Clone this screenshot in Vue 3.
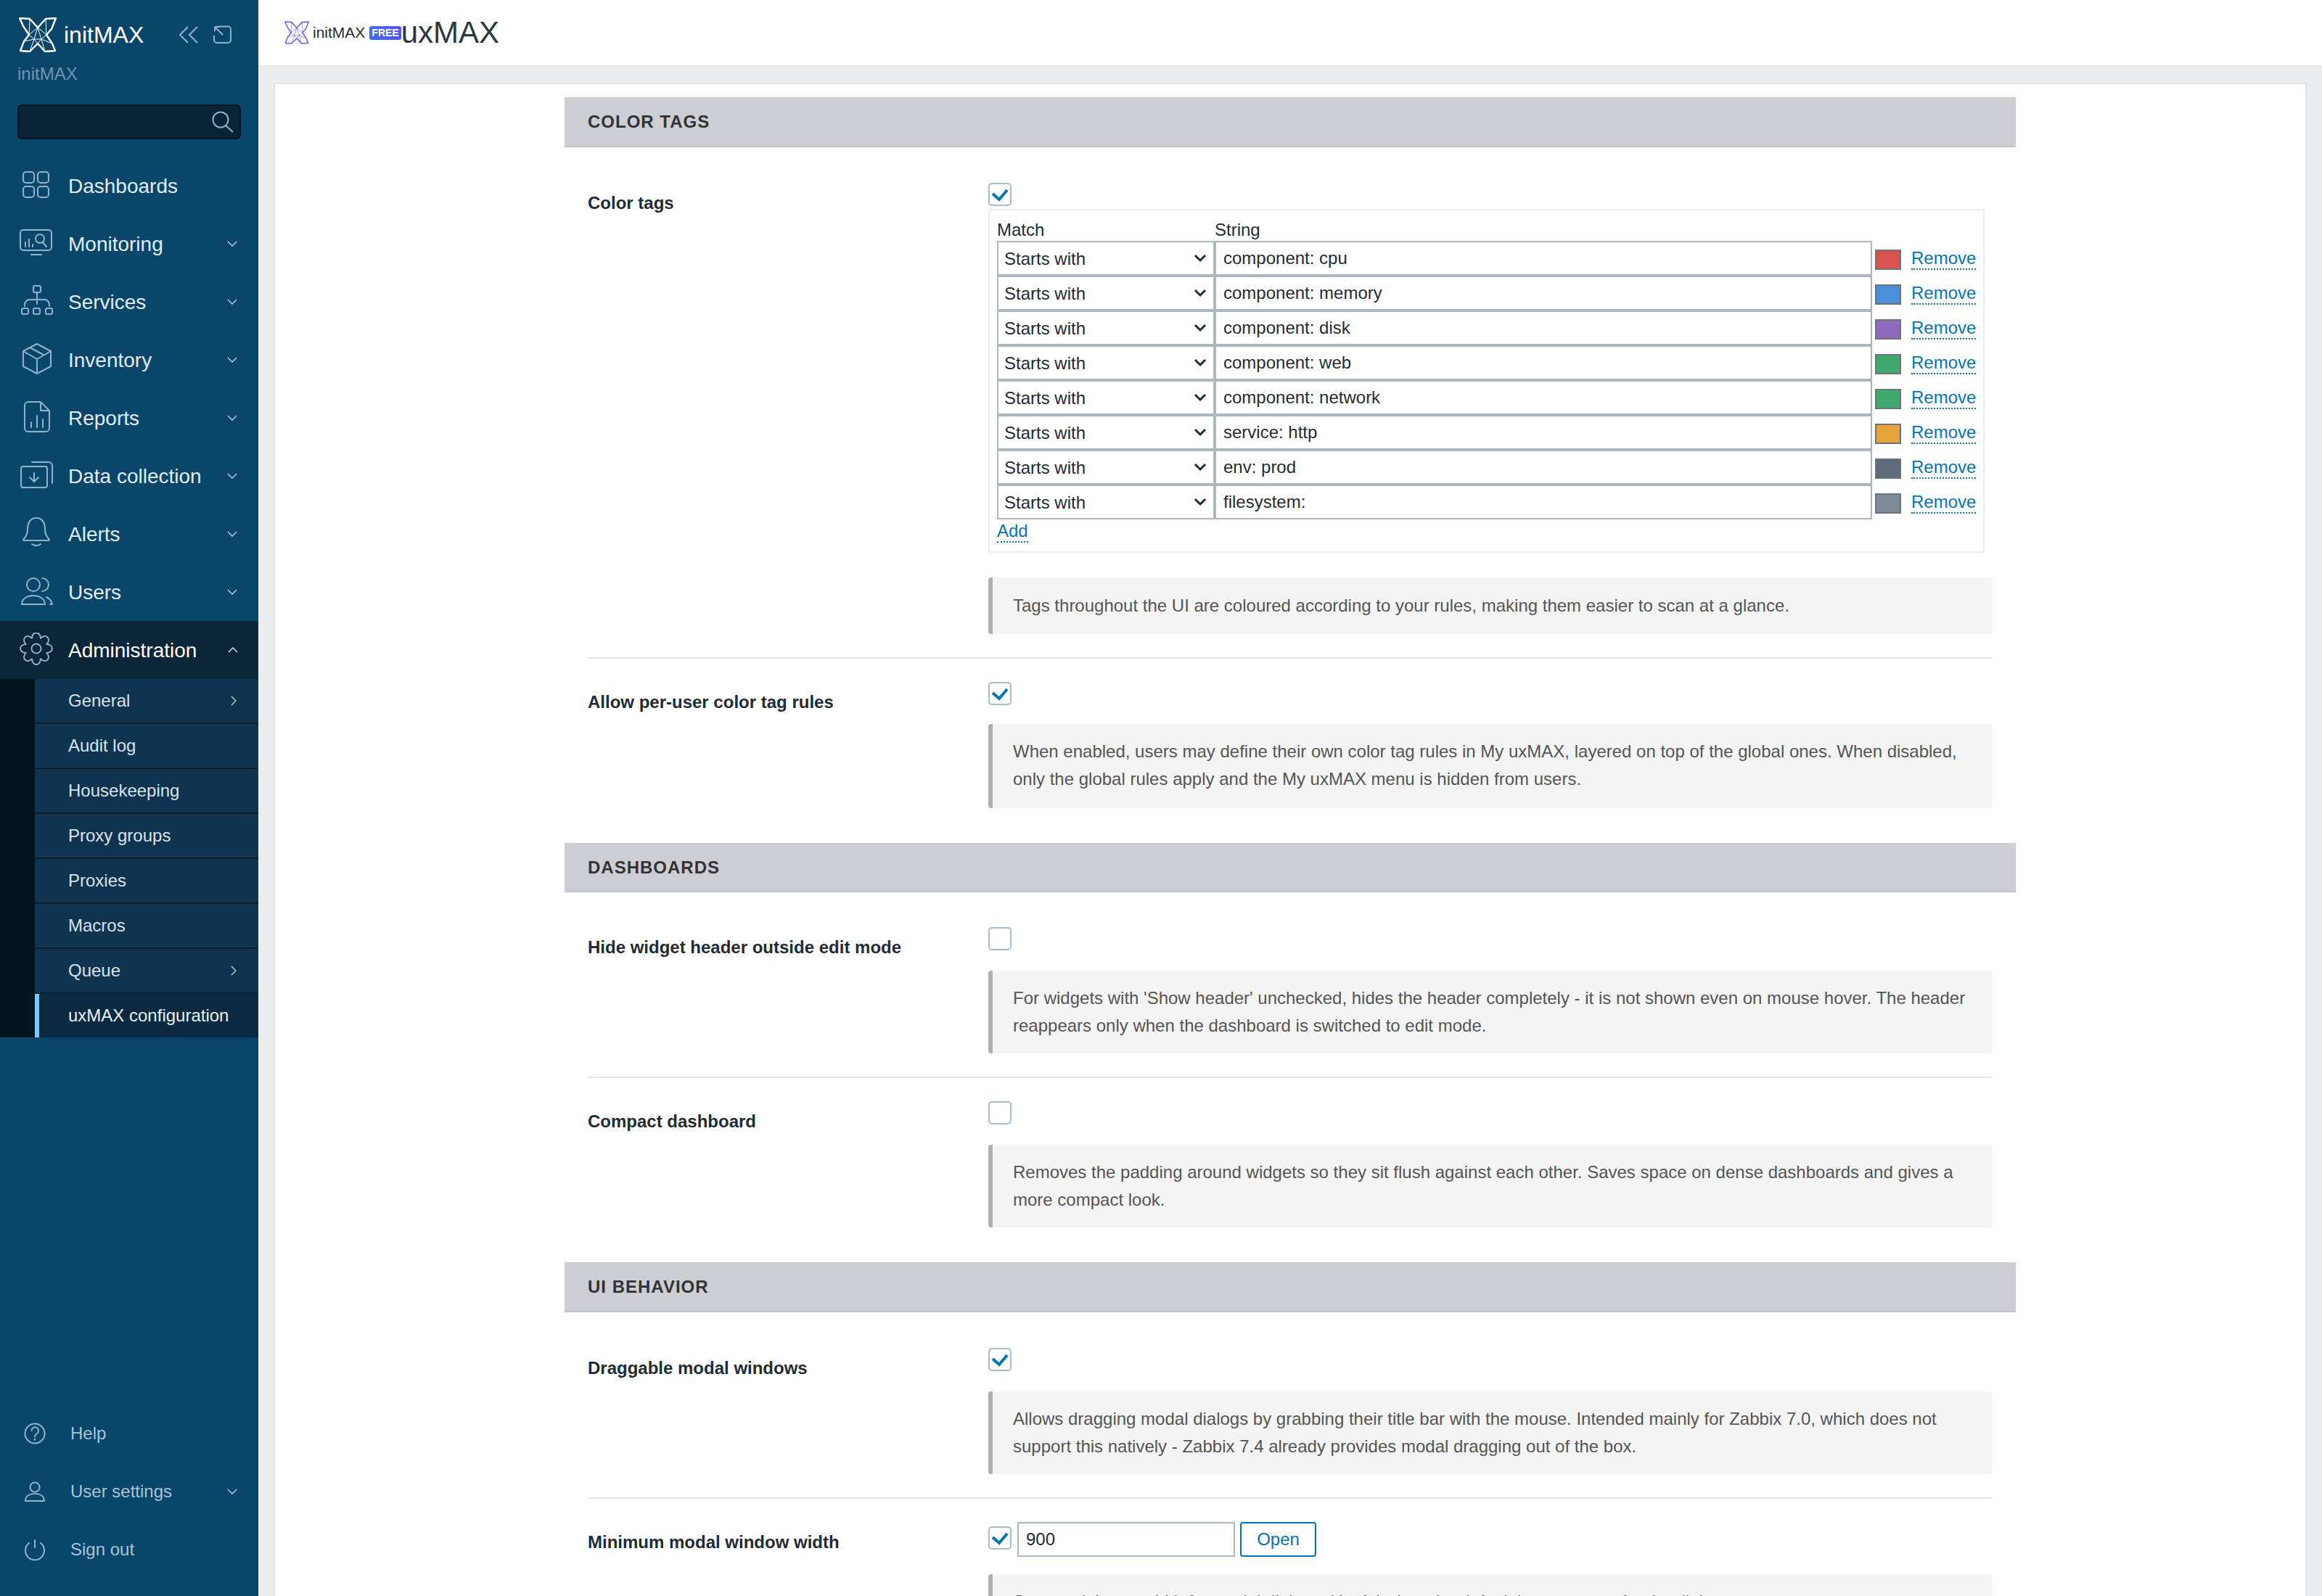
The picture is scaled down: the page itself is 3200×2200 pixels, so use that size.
<script setup>
const rr = (x, y, w, h, r) =>
  `M${x + r} ${y}H${x + w - r}a${r} ${r} 0 0 1 ${r} ${r}V${y + h - r}a${r} ${r} 0 0 1 -${r} ${r}H${x + r}a${r} ${r} 0 0 1 -${r} -${r}V${y + r}a${r} ${r} 0 0 1 ${r} -${r}Z`;

const circle = (cx, cy, r) =>
  `M${cx - r} ${cy}a${r} ${r} 0 1 0 ${r * 2} 0a${r} ${r} 0 1 0 -${r * 2} 0Z`;

// cog with eight rounded lobes
const gear = () => {
  const cx = 24;
  const cy = 22;
  const pt = (rad, a) => `${(cx + rad * Math.cos(a)).toFixed(1)} ${(cy + rad * Math.sin(a)).toFixed(1)}`;
  const step = Math.PI / 4;
  let d = `M${pt(15.5, -step / 2)}`;
  for (let i = 0; i < 8; i++) {
    const a = i * step;
    d += `C${pt(25, a - 0.22)} ${pt(25, a + 0.22)} ${pt(15.5, a + step / 2)}`;
  }
  return d + "Z" + circle(cx, cy, 6.5);
};

const icons = {
  dashboards: rr(6, 5, 15, 15, 4) + rr(26, 5, 15, 15, 4) + rr(6, 25, 15, 15, 4) + rr(26, 25, 15, 15, 4),
  monitoring: rr(2, 5, 43, 28, 4) + "M17 39H31M9 28V22M14 28V18M19 28V25" + circle(29, 17, 6) + "M33 22L38 28",
  services: rr(20, 2, 10, 9, 2) + "M25 11V27M8 30V28a7 7 0 0 1 7 -7H35a7 7 0 0 1 7 7V30" + rr(4, 33, 9, 8, 2) + rr(20, 33, 9, 8, 2) + rr(37, 33, 9, 8, 2),
  inventory: "M25 2L44 12V33L25 43L6 33V12ZM6 12L25 23L44 12M25 23V43M15 7L34 17",
  reports: "M13 2H30L42 14V38a5 5 0 0 1 -5 5H13a5 5 0 0 1 -5 -5V7a5 5 0 0 1 5 -5ZM30 2V14H42M17 37V30M25 37V21M33 37V26",
  data: rr(3, 11, 36, 29, 3) + "M18 5H41a5 5 0 0 1 5 5V34M21 20V31M15 26L21 32L27 26",
  alerts: "M24 2C15 2 12 10 12 17C12 25 9 29 6 32a1 1 0 0 0 1 1H41a1 1 0 0 0 1 -1C39 29 36 25 36 17C36 10 33 2 24 2ZM18 38Q24 42 30 38",
  users: circle(20, 14, 9) + "M4 41C4 33 12 29 20 29C28 29 36 33 36 41ZM32 5a9 9 0 0 1 0 18M38 31C42 33 45 36 46 41H43",
  gear: gear(),
  help: circle(24, 24, 13.5) + "M19.5 20a4.8 4.8 0 1 1 7.5 4c-2 1.4 -3 2.4 -3 4.5M24 31.5V33",
  user: circle(24, 18, 6.5) + "M11 37C11 30 17 27 24 27C31 27 37 30 37 37Z",
  power: "M24 11V21M16 15a13 13 0 1 0 16 0"
};

const navItems = [
  { label: "Dashboards", icon: "dashboards" },
  { label: "Monitoring", icon: "monitoring", more: true },
  { label: "Services", icon: "services", more: true },
  { label: "Inventory", icon: "inventory", more: true },
  { label: "Reports", icon: "reports", more: true },
  { label: "Data collection", icon: "data", more: true },
  { label: "Alerts", icon: "alerts", more: true },
  { label: "Users", icon: "users", more: true }
];

const subItems = [
  { label: "General", more: true },
  { label: "Audit log" },
  { label: "Housekeeping" },
  { label: "Proxy groups" },
  { label: "Proxies" },
  { label: "Macros" },
  { label: "Queue", more: true },
  { label: "uxMAX configuration", active: true }
];

const footerItems = [
  { label: "Help", icon: "help" },
  { label: "User settings", icon: "user", more: true },
  { label: "Sign out", icon: "power" }
];

const tagRules = [
  { value: "component: cpu", color: "#d9534f" },
  { value: "component: memory", color: "#4a90d9" },
  { value: "component: disk", color: "#8e6bbf" },
  { value: "component: web", color: "#3fa86b" },
  { value: "component: network", color: "#3fa86b" },
  { value: "service: http", color: "#e5a33b" },
  { value: "env: prod", color: "#5d6b7a" },
  { value: "filesystem:", color: "#7d8a97" }
];

const checkMark = "M2 11L11 19L22 6";
const logoOutline = "M1 1L15 2L26 14L37 2L51 1L45 16L38 24L46 36L50 46L36 47L26 36L15 47L2 46L7 33L14 24L6 12Z";
const logoMesh = "M15 2L14 24L26 14L38 24L37 2M6 12L14 24L7 33L21 30L15 47M45 16L38 24L46 36L31 30L36 47M14 24L21 30L26 36L31 30L38 24M26 14L21 30M26 14L31 30M21 30H31";
</script>

<template>
  <div class="page">
    <aside class="sidebar">
      <div class="brand">
        <svg class="logo" viewBox="0 0 52 48" width="52" height="48">
          <path :d="logoOutline" fill="none" stroke="#fff" stroke-width="2.4" stroke-linejoin="round" />
          <path :d="logoMesh" fill="none" stroke="#fff" stroke-width="1" />
        </svg>
        <span class="brand-name">initMAX</span>
        <svg class="brand-tool collapse" viewBox="0 0 28 24" width="28" height="24">
          <path d="M13 1L2 12L13 23M26 1L15 12L26 23" />
        </svg>
        <svg class="brand-tool expand" viewBox="0 0 26 26" width="26" height="26">
          <path d="M6 1.5H20a4 4 0 0 1 4 4V20a4 4 0 0 1 -4 4H5a4 4 0 0 1 -4 -4V14M2 2L13 13M2 2V8M2 2H8" />
        </svg>
      </div>
      <div class="instance">initMAX</div>
      <div class="search">
        <svg viewBox="0 0 30 30" width="30" height="30">
          <path :d="circle(12, 12, 10.5)" />
          <path d="M19 20L29 29" />
        </svg>
      </div>

      <nav class="nav">
        <a v-for="item in navItems" :key="item.label" class="nav-item">
          <svg class="icon" viewBox="0 0 48 48" width="48" height="48"><path :d="icons[item.icon]" /></svg>
          <span class="nav-label">{{ item.label }}</span>
          <svg v-if="item.more" class="chev" viewBox="0 0 14 8" width="14" height="8"><path d="M1 1L7 7L13 1" /></svg>
        </a>
        <a class="nav-item open">
          <svg class="icon" viewBox="0 0 48 48" width="48" height="48"><path :d="icons.gear" /></svg>
          <span class="nav-label">Administration</span>
          <svg class="chev up" viewBox="0 0 14 8" width="14" height="8"><path d="M1 7L7 1L13 7" /></svg>
        </a>
        <div class="submenu">
          <a v-for="sub in subItems" :key="sub.label" :class="['sub-item', { active: sub.active }]">
            <span>{{ sub.label }}</span>
            <svg v-if="sub.more" class="chev-right" viewBox="0 0 8 14" width="8" height="14"><path d="M1 1L7 7L1 13" /></svg>
          </a>
        </div>
      </nav>

      <div class="sidebar-footer">
        <a v-for="item in footerItems" :key="item.label" class="foot-item">
          <svg class="icon" viewBox="0 0 48 48" width="48" height="48"><path :d="icons[item.icon]" /></svg>
          <span class="foot-label">{{ item.label }}</span>
          <svg v-if="item.more" class="chev" viewBox="0 0 14 8" width="14" height="8"><path d="M1 1L7 7L13 1" /></svg>
        </a>
      </div>
    </aside>

    <div class="main">
      <header class="topbar">
        <svg class="top-logo" viewBox="0 0 52 48" width="34" height="32">
          <path :d="logoOutline" fill="none" stroke="#6c63f5" stroke-width="2.4" stroke-linejoin="round" />
          <path :d="logoMesh" fill="none" stroke="#6c63f5" stroke-width="1" />
        </svg>
        <span class="top-brand">initMAX</span>
        <span class="badge">FREE</span>
        <h1>uxMAX</h1>
      </header>

      <div class="content">
        <div class="card">
          <form class="form">
            <section>
              <h2>Color tags</h2>
              <div class="row first">
                <label>Color tags</label>
                <div class="field">
                  <span class="check on">
                    <svg viewBox="0 0 24 24" width="24" height="24"><path :d="checkMark" /></svg>
                  </span>
                  <div class="tag-table">
                    <div class="tag-head"><span class="col-match">Match</span><span>String</span></div>
                    <div v-for="rule in tagRules" :key="rule.value" class="tag-row">
                      <select class="tag-select"><option>Starts with</option></select>
                      <input class="tag-input" type="text" :value="rule.value" />
                      <span class="swatch" :style="{ background: rule.color }"></span>
                      <a class="link">Remove</a>
                    </div>
                    <a class="link add">Add</a>
                  </div>
                  <p class="note table-note">Tags throughout the UI are coloured according to your rules, making them easier to scan at a glance.</p>
                </div>
              </div>
              <div class="row">
                <label>Allow per-user color tag rules</label>
                <div class="field">
                  <span class="check on">
                    <svg viewBox="0 0 24 24" width="24" height="24"><path :d="checkMark" /></svg>
                  </span>
                  <p class="note allow-note">When enabled, users may define their own color tag rules in My uxMAX, layered on top of the global ones. When disabled, only the global rules apply and the My uxMAX menu is hidden from users.</p>
                </div>
              </div>
            </section>

            <section class="tight">
              <h2>Dashboards</h2>
              <div class="row first">
                <label>Hide widget header outside edit mode</label>
                <div class="field">
                  <span class="check"></span>
                  <p class="note">For widgets with 'Show header' unchecked, hides the header completely - it is not shown even on mouse hover. The header reappears only when the dashboard is switched to edit mode.</p>
                </div>
              </div>
              <div class="row">
                <label>Compact dashboard</label>
                <div class="field">
                  <span class="check"></span>
                  <p class="note">Removes the padding around widgets so they sit flush against each other. Saves space on dense dashboards and gives a more compact look.</p>
                </div>
              </div>
            </section>

            <section>
              <h2>UI behavior</h2>
              <div class="row first">
                <label>Draggable modal windows</label>
                <div class="field">
                  <span class="check on">
                    <svg viewBox="0 0 24 24" width="24" height="24"><path :d="checkMark" /></svg>
                  </span>
                  <p class="note">Allows dragging modal dialogs by grabbing their title bar with the mouse. Intended mainly for Zabbix 7.0, which does not support this natively - Zabbix 7.4 already provides modal dragging out of the box.</p>
                </div>
              </div>
              <div class="row">
                <label>Minimum modal window width</label>
                <div class="field">
                  <div class="width-line">
                    <span class="check on">
                      <svg viewBox="0 0 24 24" width="24" height="24"><path :d="checkMark" /></svg>
                    </span>
                    <input class="width-input" type="text" value="900" />
                    <button class="open-btn" type="button">Open</button>
                  </div>
                  <p class="note width-note">Sets a minimum width for modal dialogs. Useful when the default is too narrow for the dialog content.</p>
                </div>
              </div>
            </section>
          </form>
        </div>
      </div>
    </div>
  </div>
</template>

<style>
html,
body {
  margin: 0;
  overflow: hidden;
}
</style>

<style scoped>
.page {
  display: flex;
  width: 3200px;
  height: 2200px;
  overflow: hidden;
  font-family: "Liberation Sans", Arial, sans-serif;
  font-size: 24px;
  color: #1f2c33;
  background: #ebeef0;
}

.sidebar {
  display: flex;
  flex-direction: column;
  flex: 0 0 356px;
  background: #0a466a;
}

.brand {
  display: flex;
  align-items: center;
  height: 48px;
  margin-top: 24px;
  padding-left: 26px;
}

.brand-name {
  margin-left: 10px;
  width: 158px;
  font-size: 32px;
  color: #fff;
}

.brand-tool {
  fill: none;
  stroke: #8fb3c9;
  stroke-width: 2;
}

.expand {
  margin-left: 20px;
}

.instance {
  margin: 16px 0 0 24px;
  height: 28px;
  line-height: 28px;
  color: #6f95ac;
}

.search {
  display: flex;
  align-items: center;
  justify-content: flex-end;
  box-sizing: border-box;
  height: 48px;
  margin: 28px 24px 0;
  padding-right: 8px;
  background: #092436;
  border: 2px solid #04141e;
  border-radius: 6px;
}

.search svg {
  fill: none;
  stroke: #8fb3c9;
  stroke-width: 2;
}

.nav {
  margin-top: 24px;
}

.nav-item {
  display: flex;
  align-items: center;
  height: 80px;
  padding-left: 26px;
  font-size: 28px;
  color: #e1ebf1;
}

.nav-item.open {
  background: #0a2638;
  color: #fff;
}

.icon {
  flex: none;
  fill: none;
  stroke: #8fb3c9;
  stroke-width: 2;
  stroke-linecap: round;
  stroke-linejoin: round;
}

.nav-label {
  flex: 1;
  margin-left: 20px;
  padding-top: 2px;
}

.chev {
  flex: none;
  margin-right: 29px;
  fill: none;
  stroke: #c3d6e1;
  stroke-width: 1.3;
}

.chev.up {
  margin-right: 28px;
  stroke: #e8f0f4;
}

.submenu {
  padding-left: 48px;
  background: #03141d;
}

.sub-item {
  display: flex;
  align-items: center;
  justify-content: space-between;
  box-sizing: border-box;
  height: 62px;
  padding: 0 30px 0 46px;
  background: #10344f;
  border-bottom: 2px solid #07202f;
  color: #d7e3ea;
}

.sub-item.active {
  height: 60px;
  padding-left: 40px;
  background: #0c2a40;
  border-bottom: 0;
  border-left: 6px solid #7fc7ff;
  color: #e8f0f4;
}

.chev-right {
  fill: none;
  stroke: #c3d6e1;
  stroke-width: 1.3;
}

.sidebar-footer {
  margin-top: auto;
  padding-bottom: 24px;
}

.foot-item {
  display: flex;
  align-items: center;
  height: 80px;
  padding-left: 24px;
  color: #a6c4d6;
}

.foot-label {
  flex: 1;
  margin-left: 25px;
}

.main {
  display: flex;
  flex-direction: column;
  flex: 1;
  min-width: 0;
}

.topbar {
  display: flex;
  align-items: center;
  flex: none;
  box-sizing: border-box;
  height: 92px;
  padding-left: 36px;
  background: #fff;
  border-bottom: 2px solid #e3e7ea;
}

.top-brand {
  margin-left: 5px;
  font-size: 21px;
  color: #1f2c33;
}

.badge {
  margin-left: 6px;
  padding: 0 3px;
  height: 19px;
  line-height: 19px;
  font-size: 14px;
  font-weight: 700;
  color: #fff;
  border-radius: 3px;
  background: linear-gradient(90deg, #3e6bf5, #5a55f0);
}

h1 {
  margin: 0;
  font-size: 42px;
  font-weight: 400;
  color: #2a3843;
}

.content {
  flex: 1;
  min-height: 0;
  padding: 22px 21px 0 21px;
}

.card {
  box-sizing: border-box;
  height: 100%;
  padding-top: 18px;
  background: #fff;
  border-left: 2px solid #e0e4e7;
  border-right: 2px solid #e0e4e7;
  border-top: 2px solid #e0e4e7;
}

.form {
  width: 2000px;
  margin: 0 auto;
}

h2 {
  box-sizing: border-box;
  height: 69px;
  margin: 0 0 17px;
  padding-left: 32px;
  line-height: 67px;
  font-size: 24px;
  font-weight: 700;
  letter-spacing: 1px;
  text-transform: uppercase;
  color: #333;
  background: #cdced3;
  border-bottom: 2px solid #c4c5ca;
}

.tight h2 {
  height: 68px;
  margin-bottom: 16px;
}

section {
  padding-bottom: 16px;
}

.row {
  display: flex;
  margin: 0 33px 0 32px;
  padding: 32px 0;
  border-top: 2px solid #e5e5e5;
}

.row.first {
  border-top: 0;
}

.row label {
  flex: 0 0 552px;
  padding-top: 16px;
  line-height: 24px;
  font-weight: 700;
}

.field {
  flex: 1;
  min-width: 0;
}

.check {
  display: flex;
  align-items: center;
  justify-content: center;
  flex: none;
  box-sizing: border-box;
  width: 32px;
  height: 32px;
  background: #fff;
  border: 2px solid #a9bcc8;
  border-radius: 5px;
}

.check svg {
  fill: none;
  stroke: #0275b8;
  stroke-width: 4;
}

.note {
  margin: 28px 0 0;
  padding: 19px 28px;
  background: #f4f4f4;
  border-left: 6px solid #b0b0b0;
  border-radius: 4px;
  line-height: 38px;
  color: #555;
}

.table-note {
  margin-top: 34px;
  padding: 20px 28px;
}

.allow-note {
  margin-top: 26px;
  padding-bottom: 21px;
}

.width-note {
  margin-top: 24px;
}

.tag-table {
  box-sizing: border-box;
  width: 1373px;
  height: 474px;
  margin-top: 4px;
  padding: 0 10px;
  border: 2px solid #e9edf0;
}

.tag-head {
  display: flex;
  height: 42px;
  padding-top: 12px;
  box-sizing: border-box;
  line-height: 30px;
}

.col-match {
  width: 300px;
}

.tag-row {
  display: flex;
  align-items: center;
  height: 48px;
}

.tag-select,
.tag-input,
.width-input {
  box-sizing: border-box;
  height: 48px;
  margin: 0;
  font: inherit;
  color: #1f2c33;
  background-color: #fff;
  border: 2px solid #aab9c1;
  border-radius: 0;
  outline: 0;
}

.tag-select {
  flex: 0 0 300px;
  padding-left: 8px;
  appearance: none;
  background-image: url("data:image/svg+xml,%3Csvg xmlns='http://www.w3.org/2000/svg' width='18' height='12' viewBox='0 0 18 12'%3E%3Cpath d='M2 2L9 9L16 2' fill='none' stroke='%231f2c33' stroke-width='3'/%3E%3C/svg%3E");
  background-repeat: no-repeat;
  background-position: right 9px center;
}

.tag-input {
  flex: 0 0 906px;
  padding: 0 10px;
}

.swatch {
  flex: none;
  box-sizing: border-box;
  width: 36px;
  height: 28px;
  margin: 4px 0 0 4px;
  border: 2px solid #6f7378;
}

.link {
  margin: 2px 0 0 14px;
  line-height: 28px;
  color: #0275b8;
  border-bottom: 2px dotted #0275b8;
}

.add {
  display: inline-block;
  margin: 2px 0 0;
}

.width-line {
  display: flex;
  align-items: flex-start;
}

.width-line .check {
  margin-top: 6px;
  margin-right: 8px;
}

.width-input {
  width: 300px;
  padding: 0 10px;
}

.open-btn {
  box-sizing: border-box;
  width: 105px;
  height: 48px;
  margin-left: 7px;
  font: inherit;
  color: #0275b8;
  background: #fff;
  border: 2px solid #0275b8;
  border-radius: 4px;
}
</style>
